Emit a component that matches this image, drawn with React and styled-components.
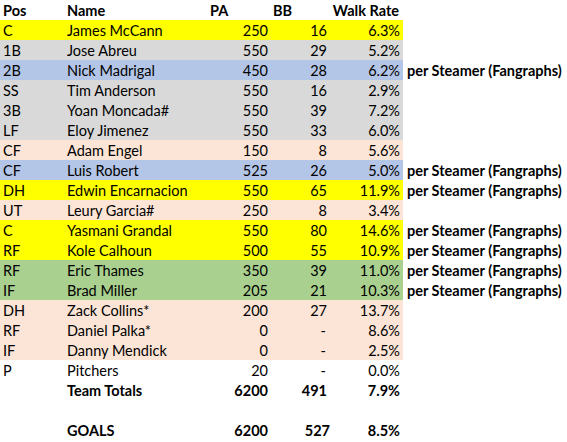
import React from 'react';
import styled, { createGlobalStyle } from 'styled-components';

const GlobalStyle = createGlobalStyle`
  html, body {
    margin: 0;
    padding: 0;
    background: #ffffff;
  }
  body {
    font-family: Lato, "Open Sans", sans-serif;
    color: #000;
  }
`;

const colors = {
  yellow: '#ffff00',
  gray: '#d9d9d9',
  blue: '#b4c6e7',
  peach: '#fce4d6',
  green: '#a9d08e',
  none: 'transparent',
};

const players = [
  ['C', 'James McCann', '250', '16', '6.3%', 'yellow'],
  ['1B', 'Jose Abreu', '550', '29', '5.2%', 'gray'],
  ['2B', 'Nick Madrigal', '450', '28', '6.2%', 'blue', true],
  ['SS', 'Tim Anderson', '550', '16', '2.9%', 'gray'],
  ['3B', 'Yoan Moncada#', '550', '39', '7.2%', 'gray'],
  ['LF', 'Eloy Jimenez', '550', '33', '6.0%', 'gray'],
  ['CF', 'Adam Engel', '150', '8', '5.6%', 'peach'],
  ['CF', 'Luis Robert', '525', '26', '5.0%', 'blue', true],
  ['DH', 'Edwin Encarnacion', '550', '65', '11.9%', 'yellow', true],
  ['UT', 'Leury Garcia#', '250', '8', '3.4%', 'peach'],
  ['C', 'Yasmani Grandal', '550', '80', '14.6%', 'yellow', true],
  ['RF', 'Kole Calhoun', '500', '55', '10.9%', 'yellow', true],
  ['RF', 'Eric Thames', '350', '39', '11.0%', 'green', true],
  ['IF', 'Brad Miller', '205', '21', '10.3%', 'green', true],
  ['DH', 'Zack Collins*', '200', '27', '13.7%', 'peach'],
  ['RF', 'Daniel Palka*', '0', '-', '8.6%', 'peach'],
  ['IF', 'Danny Mendick', '0', '-', '2.5%', 'peach'],
  ['P', 'Pitchers', '20', '-', '0.0%', 'none'],
];

const Sheet = styled.div`
  display: flex;
  flex-direction: column;
  width: 567px;
  font-size: 14.5px;
`;

const Row = styled.div`
  display: flex;
  height: 20px;
  font-weight: ${({ $bold }) => ($bold ? 700 : 400)};
`;

const Band = styled.div`
  display: grid;
  grid-template-columns: 64px 143px 63px 60px 73px;
  width: 403px;
  height: 20px;
  background: ${({ $tone }) => colors[$tone] || 'transparent'};
`;

const Cell = styled.div`
  display: flex;
  align-items: center;
  justify-content: ${({ $align }) => ($align === 'right' ? 'flex-end' : 'flex-start')};
  padding: 1px ${({ $pr }) => $pr ?? 3}px 0 ${({ $pl }) => $pl ?? 3}px;
  white-space: nowrap;
  line-height: 19px;
`;

const Note = styled.div`
  display: flex;
  align-items: center;
  padding: 1px 0 0 4px;
  font-weight: 700;
  white-space: nowrap;
  line-height: 19px;
`;

const DataRow = ({ pos, name, pa, bb, rate, tone, note, bold, bbPad }) => (
  <Row $bold={bold}>
    <Band $tone={tone}>
      <Cell>{pos}</Cell>
      <Cell>{name}</Cell>
      <Cell $align="right" $pr={2}>{pa}</Cell>
      <Cell $align="right" $pr={bbPad ?? (bb === '-' ? 4 : 3)}>{bb}</Cell>
      <Cell $align="right" $pr={3}>{rate}</Cell>
    </Band>
    {note && <Note>per Steamer (Fangraphs)</Note>}
  </Row>
);

const App = () => {
  return (
    <>
      <GlobalStyle />
      <Sheet>
        <Row $bold>
          <Band>
            <Cell>Pos</Cell>
            <Cell>Name</Cell>
            <Cell>PA</Cell>
            <Cell>BB</Cell>
            <Cell $align="right" $pr={4}>Walk Rate</Cell>
          </Band>
        </Row>
        {players.map(([pos, name, pa, bb, rate, tone, note]) => (
          <DataRow
            key={name}
            pos={pos}
            name={name}
            pa={pa}
            bb={bb}
            rate={rate}
            tone={tone}
            note={note}
          />
        ))}
        <DataRow name="Team Totals" pa="6200" bb="491" rate="7.9%" bold />
        <Row />
        <DataRow name="GOALS" pa="6200" bb="527" rate="8.5%" bold bbPad={0} />
      </Sheet>
    </>
  );
};

export default App;
